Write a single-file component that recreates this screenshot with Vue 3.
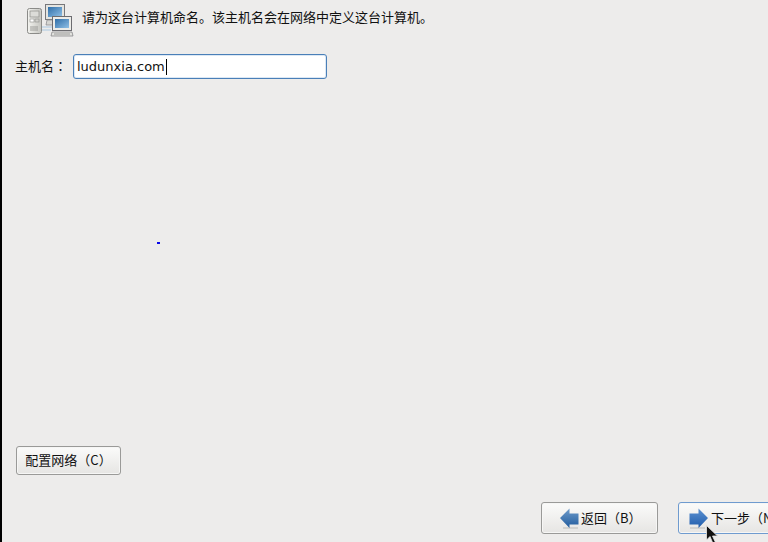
<script setup>
const hostname = 'ludunxia.com'
</script>

<template>
  <div class="screen">
    <header class="head">
      <svg class="net" width="50" height="34" viewBox="0 0 50 34">
        <defs>
          <linearGradient id="scr" x1="0" y1="0" x2="1" y2="1"><stop offset="0" stop-color="#2f6ea8"/><stop offset="1" stop-color="#8fc0e6"/></linearGradient>
          <linearGradient id="tower" x1="0" y1="0" x2="1" y2="0"><stop offset="0" stop-color="#f4f4f0"/><stop offset="1" stop-color="#c4c4bf"/></linearGradient>
        </defs>
        <rect x="2.5" y="5.5" width="14" height="25" rx="2" fill="url(#tower)" stroke="#8b8b88"/>
        <rect x="5" y="8" width="9" height="6" fill="#dcdcd8" stroke="#8e8e8a" stroke-width=".7"/>
        <rect x="5" y="16" width="4" height="3" fill="#fff" stroke="#8e8e8a" stroke-width=".6"/>
        <rect x="10" y="16" width="4" height="3" fill="#cfcfca" stroke="#8e8e8a" stroke-width=".6"/>
        <path d="M6 23v5M8 23v5M10 23v5M12 23v5" stroke="#8e8e8a" stroke-width=".8"/>
        <path d="M17 24h10M17 27h9" stroke="#a9c8e2" stroke-width="1.2"/>
        <rect x="20.5" y="1.5" width="19" height="15" fill="#e4e4e0" stroke="#77777a"/>
        <rect x="23" y="4" width="14" height="10" fill="url(#scr)"/>
        <path d="M22 17h10l-1 5H21z" fill="#d6d6d2" stroke="#85858a" stroke-width=".7"/>
        <rect x="27.5" y="13.5" width="19" height="14" fill="#ecece8" stroke="#6c6c70"/>
        <rect x="30" y="16" width="14" height="9" fill="url(#scr)"/>
        <path d="M27 29h20l1 4H26z" fill="#e2e2de" stroke="#7c7c80" stroke-width=".7"/>
        <path d="M29 31h16" stroke="#8c8c8c" stroke-width=".8"/>
      </svg>
      <p class="intro">请为这台计算机命名。该主机名会在网络中定义这台计算机。</p>
    </header>

    <div class="host">
      <label class="label">主机名<span class="colon">：</span></label>
      <div class="field"><span>{{ hostname }}</span><i class="caret"></i></div>
    </div>

    <div class="spacer"></div>

    <div class="config"><button class="btn wide">配置网络（C）</button></div>

    <footer class="foot">
      <button class="btn nav">
        <svg width="19" height="22" viewBox="0 0 19 22">
          <defs><linearGradient id="ab" x1="0" y1="0" x2="0" y2="1"><stop offset="0" stop-color="#6f9ccb"/><stop offset="1" stop-color="#1f5a9c"/></linearGradient></defs>
          <path d="M3 19h15v2H3z" fill="#d2d2d0"/>
          <path d="M0 10 9.500 .5V5.500H18.500V16.500H9.500V20z" fill="url(#ab)"/>
        </svg>
        <span>返回（B）</span>
      </button>
      <button class="btn nav next">
        <svg width="19" height="22" viewBox="0 0 19 22">
          <defs><linearGradient id="nb" x1="0" y1="0" x2="0" y2="1"><stop offset="0" stop-color="#5d92d2"/><stop offset="1" stop-color="#1f5cab"/></linearGradient></defs>
          <path d="M1 19h15v2H1z" fill="#d2d2d0"/>
          <path d="M19 10 9.500 .5V5.500H.5V16.500H9.500V20z" fill="url(#nb)"/>
        </svg>
        <span>下一步（N）</span>
      </button>
    </footer>

    <i class="dot"></i>
    <svg class="pointer" width="14" height="19" viewBox="0 0 14 19"><path d="M1.500 .5V15l3.500-3.500 3 7 2.500-1-3-6.500H12.500z" fill="#111" stroke="#e8e8e8" stroke-width=".8"/></svg>
  </div>
</template>

<style scoped>
.screen {
  position: relative;
  width: 768px;
  height: 542px;
  box-sizing: border-box;
  overflow: hidden;
  display: flex;
  flex-direction: column;
  border-left: 2px solid #000;
  background: #edeceb;
  color: #111;
  font-family: "Noto Sans CJK SC", "DejaVu Sans", sans-serif;
  font-size: 13px;
}
.head {
  display: flex;
  align-items: flex-start;
  height: 36px;
  padding: 3px 0 0 23px;
  box-sizing: border-box;
}
.net { flex: none; }
.intro { margin: 4px 0 0 7px; line-height: 19px; white-space: nowrap; }
.host {
  display: flex;
  align-items: center;
  margin-top: 18px;
  padding-left: 13px;
}
.label { width: 58px; margin-top: -2px; white-space: nowrap; }
.colon { font-family: "Noto Sans CJK TC", sans-serif; }
.field {
  width: 254px;
  height: 25px;
  box-sizing: border-box;
  display: flex;
  align-items: center;
  padding-left: 3px;
  background: #fff;
  border: 1px solid #4a7fb8;
  border-radius: 3px;
  box-shadow: inset 0 0 0 1px #dce8f4;
  font-family: "DejaVu Sans", sans-serif;
  font-size: 13px;
}
.caret { width: 1px; height: 16px; margin-left: 1px; background: #000; }
.spacer { flex: 1; }
.config { padding-left: 14px; }
.btn {
  box-sizing: border-box;
  display: flex;
  align-items: center;
  margin: 0;
  border: 1px solid #9a9a98;
  border-radius: 3px;
  background: linear-gradient(#fbfbfa, #e6e5e3);
  box-shadow: inset 0 0 0 1px #f6f6f5;
  color: #111;
  font: inherit;
  white-space: nowrap;
}
.wide { width: 105px; height: 29px; justify-content: center; padding: 0 0 2px; }
.foot {
  display: flex;
  gap: 20px;
  margin-top: 27px;
  padding: 0 0 8px 539px;
}
.nav {
  flex: none;
  width: 117px;
  height: 32px;
  padding: 0 0 0 18px;
  gap: 2px;
}
.nav span { margin-bottom: 2px; }
.nav svg { margin-top: 1px; }
.next { border-color: #6f9bcf; padding-left: 10px; width: 130px; gap: 3px; }
.dot { position: absolute; left: 155px; top: 242px; width: 3px; height: 2px; background: #0808e8; }
.pointer { position: absolute; left: 703px; top: 525px; }
</style>
